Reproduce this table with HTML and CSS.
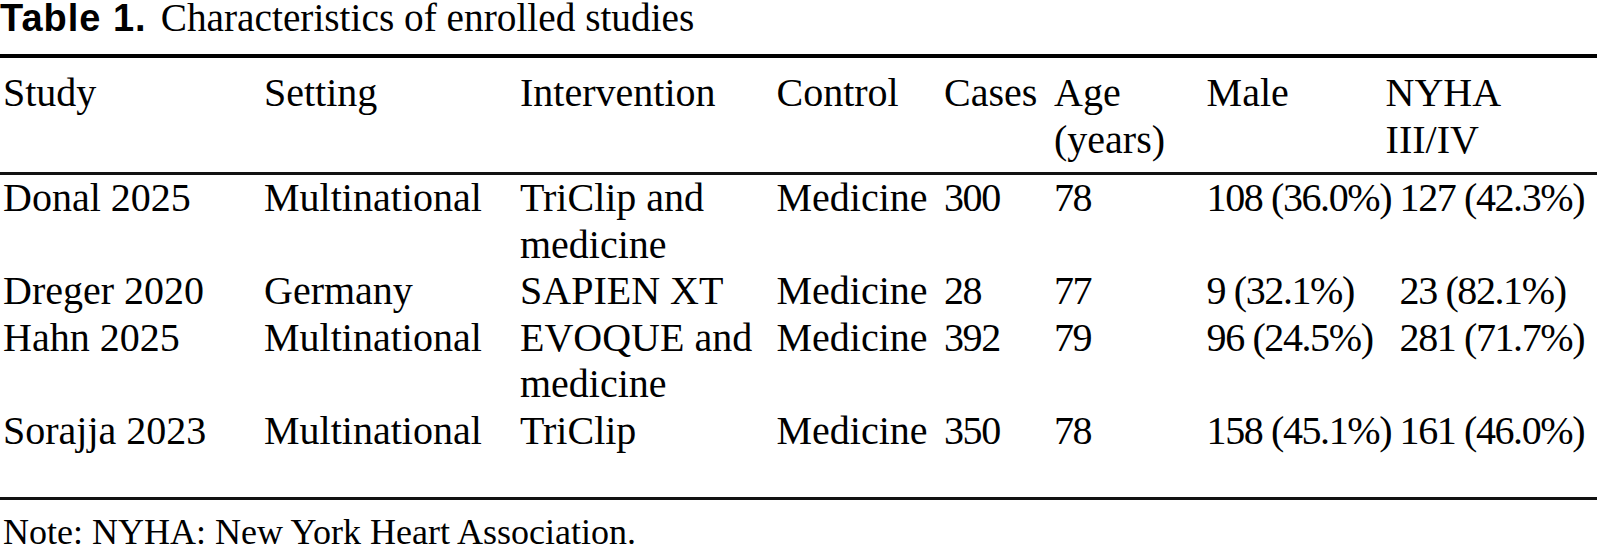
FILE: index.html
```html
<!DOCTYPE html>
<html>
<head>
<meta charset="utf-8">
<link rel="stylesheet" href="styles.css">
</head>
<body>
<div class="page">
  <div class="caption"><span class="label">Table 1.</span><span class="title">Characteristics of enrolled studies</span></div>
  <div class="rules">
    <table class="tbl">
      <colgroup>
        <col class="c1"><col class="c2"><col class="c3"><col class="c4"><col class="c5"><col class="c6"><col class="c7"><col class="c8">
      </colgroup>
      <thead>
        <tr>
          <th>Study</th><th>Setting</th><th>Intervention</th><th>Control</th><th>Cases</th><th>Age (years)</th><th>Male</th><th>NYHA III/IV</th>
        </tr>
      </thead>
      <tbody>
        <tr>
          <td>Donal 2025</td><td>Multinational</td><td>TriClip and medicine</td><td>Medicine</td><td class="num">300</td><td class="num">78</td><td class="num">108 (36.0%)</td><td class="num last">127 (42.3%)</td>
        </tr>
        <tr>
          <td>Dreger 2020</td><td>Germany</td><td>SAPIEN XT</td><td>Medicine</td><td class="num">28</td><td class="num">77</td><td class="num">9 (32.1%)</td><td class="num last">23 (82.1%)</td>
        </tr>
        <tr>
          <td>Hahn 2025</td><td>Multinational</td><td>EVOQUE and medicine</td><td>Medicine</td><td class="num">392</td><td class="num">79</td><td class="num">96 (24.5%)</td><td class="num last">281 (71.7%)</td>
        </tr>
        <tr class="final">
          <td>Sorajja 2023</td><td>Multinational</td><td>TriClip</td><td>Medicine</td><td class="num">350</td><td class="num">78</td><td class="num">158 (45.1%)</td><td class="num last">161 (46.0%)</td>
        </tr>
      </tbody>
    </table>
  </div>
  <div class="note">Note: NYHA: New York Heart Association.</div>
</div>
</body>
</html>
```
FILE: styles.css
```css
html, body {
  margin: 0;
  padding: 0;
  background: #ffffff;
}
.page {
  width: 1597px;
  color: #000;
  font-family: "Liberation Serif", "Times New Roman", serif;
}
.caption {
  font-size: 39px;
  line-height: 30px;
  padding-top: 3px;
  white-space: nowrap;
}
.label {
  font-family: "Liberation Sans", Arial, sans-serif;
  font-weight: bold;
  font-size: 38px;
  letter-spacing: 1px;
  margin-right: 14px;
}
.title {
  font-size: 39.3px;
}
.rules {
  margin-top: 21px;
  border-top: 4px solid #000;
  border-bottom: 3px solid #111;
}
.tbl {
  width: 1597px;
  table-layout: fixed;
  border-collapse: separate;
  border-spacing: 0;
  font-size: 40px;
  line-height: 46.5px;
}
.c1 { width: 261px; }
.c2 { width: 256px; }
.c3 { width: 256.5px; }
.c4 { width: 167.5px; }
.c5 { width: 110px; }
.c6 { width: 152.6px; }
.c7 { width: 179px; }
.c8 { width: 214.5px; }
.tbl th {
  font-weight: normal;
  text-align: left;
  vertical-align: top;
  padding: 12px 0 9px 3px;
  border-bottom: 3px solid #111;
}
.tbl td {
  text-align: left;
  vertical-align: top;
  padding: 0 0 0 3px;
}
.tbl td.num {
  white-space: nowrap;
  letter-spacing: -1.4px;
}
.tbl td.last {
  padding-left: 17px;
}
.tbl tr.final td {
  padding-bottom: 43px;
}
.note {
  font-size: 36px;
  line-height: 30px;
  margin-top: 17px;
  padding-left: 3px;
  white-space: nowrap;
}
```
